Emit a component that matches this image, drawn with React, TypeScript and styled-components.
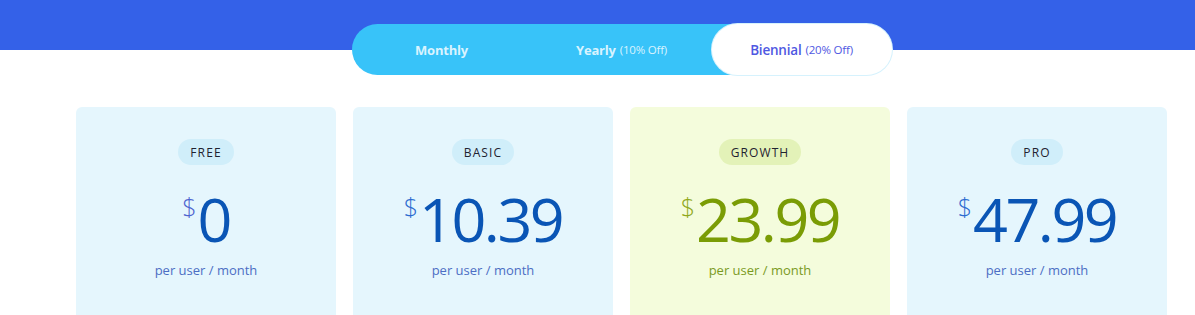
import React from "react";
import styled, { createGlobalStyle } from "styled-components";

const GlobalStyle = createGlobalStyle`
  html, body { margin: 0; padding: 0; background: #ffffff; }
  body { font-family: "Open Sans", "Noto Sans", Arial, sans-serif; }
  * { box-sizing: border-box; }
`;

const Page = styled.div`
  width: 1195px;
  height: 315px;
  overflow: hidden;
  background: linear-gradient(to bottom, #3461e8 0, #3461e8 50px, #ffffff 50px);
  padding: 24px 0 0 48px;
`;

const Inner = styled.div`
  display: flex;
  flex-direction: column;
  align-items: center;
  gap: 32px;
`;

const Toggle = styled.div`
  display: grid;
  grid-template-columns: repeat(3, 180px);
  height: 51px;
  border-radius: 26px;
  background: #38c3f9;
`;

const Segment = styled.div<{ $active?: boolean }>`
  display: flex;
  align-items: center;
  justify-content: center;
  gap: 4px;
  border-radius: 26px;
  background: ${(p) => (p.$active ? "#ffffff" : "transparent")};
  color: ${(p) => (p.$active ? "#4f58e2" : "#d9f3ff")};
  font-size: ${(p) => (p.$active ? "13.5px" : "13px")};
  font-weight: ${(p) => (p.$active ? 600 : 700)};
  letter-spacing: -0.2px;
  box-shadow: ${(p) => (p.$active ? "0 0 0 1px #d6f2fd" : "none")};
`;

const Off = styled.span`
  font-size: 11.5px;
  font-weight: 500;
`;

const Cards = styled.div`
  display: grid;
  grid-template-columns: repeat(4, 260px);
  gap: 17px;
`;

const Card = styled.div<{ $bg: string }>`
  height: 240px;
  border-radius: 6px;
  background: ${(p) => p.$bg};
  display: flex;
  flex-direction: column;
  align-items: center;
  padding-top: 32px;
`;

const Badge = styled.div<{ $bg: string }>`
  height: 26px;
  padding: 0 12px;
  border-radius: 13px;
  background: ${(p) => p.$bg};
  color: #1f2230;
  font-size: 12px;
  font-weight: 500;
  letter-spacing: 1.1px;
  display: flex;
  align-items: center;
`;

const Price = styled.div<{ $color: string }>`
  margin-top: 12px;
  display: flex;
  align-items: flex-start;
  color: ${(p) => p.$color};
  font-size: 61px;
  line-height: 83px;
  font-weight: 400;
  letter-spacing: -2.5px;
`;

const Dollar = styled.span<{ $color: string }>`
  font-size: 25px;
  line-height: 25px;
  color: ${(p) => p.$color};
  margin-top: 17px;
  margin-right: 1px;
  letter-spacing: 0;
  font-weight: 300;
`;

const Per = styled.div<{ $color: string }>`
  margin-top: 4px;
  font-size: 13px;
  line-height: 13px;
  color: ${(p) => p.$color};
`;

type Plan = {
  name: string;
  price: string;
  bg: string;
  badge: string;
  color: string;
  dollar: string;
  per: string;
};

const plans: Plan[] = [
  { name: "FREE", price: "0", bg: "#e5f6fd", badge: "#d0eefa", color: "#0a55b5", dollar: "#4d63cf", per: "#4c6ec4" },
  { name: "BASIC", price: "10.39", bg: "#e5f6fd", badge: "#d0eefa", color: "#0a55b5", dollar: "#2c6bd0", per: "#4c6ec4" },
  { name: "GROWTH", price: "23.99", bg: "#f4fcdc", badge: "#e3f2b8", color: "#7a9c05", dollar: "#8fa81a", per: "#7a9a1e" },
  { name: "PRO", price: "47.99", bg: "#e5f6fd", badge: "#d0eefa", color: "#0a55b5", dollar: "#2c6bd0", per: "#4c6ec4" },
];

export default function App() {
  return (
    <>
      <GlobalStyle />
      <Page>
        <Inner>
          <Toggle>
            <Segment>Monthly</Segment>
            <Segment>
              Yearly <Off>(10% Off)</Off>
            </Segment>
            <Segment $active>
              Biennial <Off>(20% Off)</Off>
            </Segment>
          </Toggle>
          <Cards>
            {plans.map((p) => (
              <Card key={p.name} $bg={p.bg}>
                <Badge $bg={p.badge}>{p.name}</Badge>
                <Price $color={p.color}>
                  <Dollar $color={p.dollar}>$</Dollar>
                  {p.price}
                </Price>
                <Per $color={p.per}>per user / month</Per>
              </Card>
            ))}
          </Cards>
        </Inner>
      </Page>
    </>
  );
}
